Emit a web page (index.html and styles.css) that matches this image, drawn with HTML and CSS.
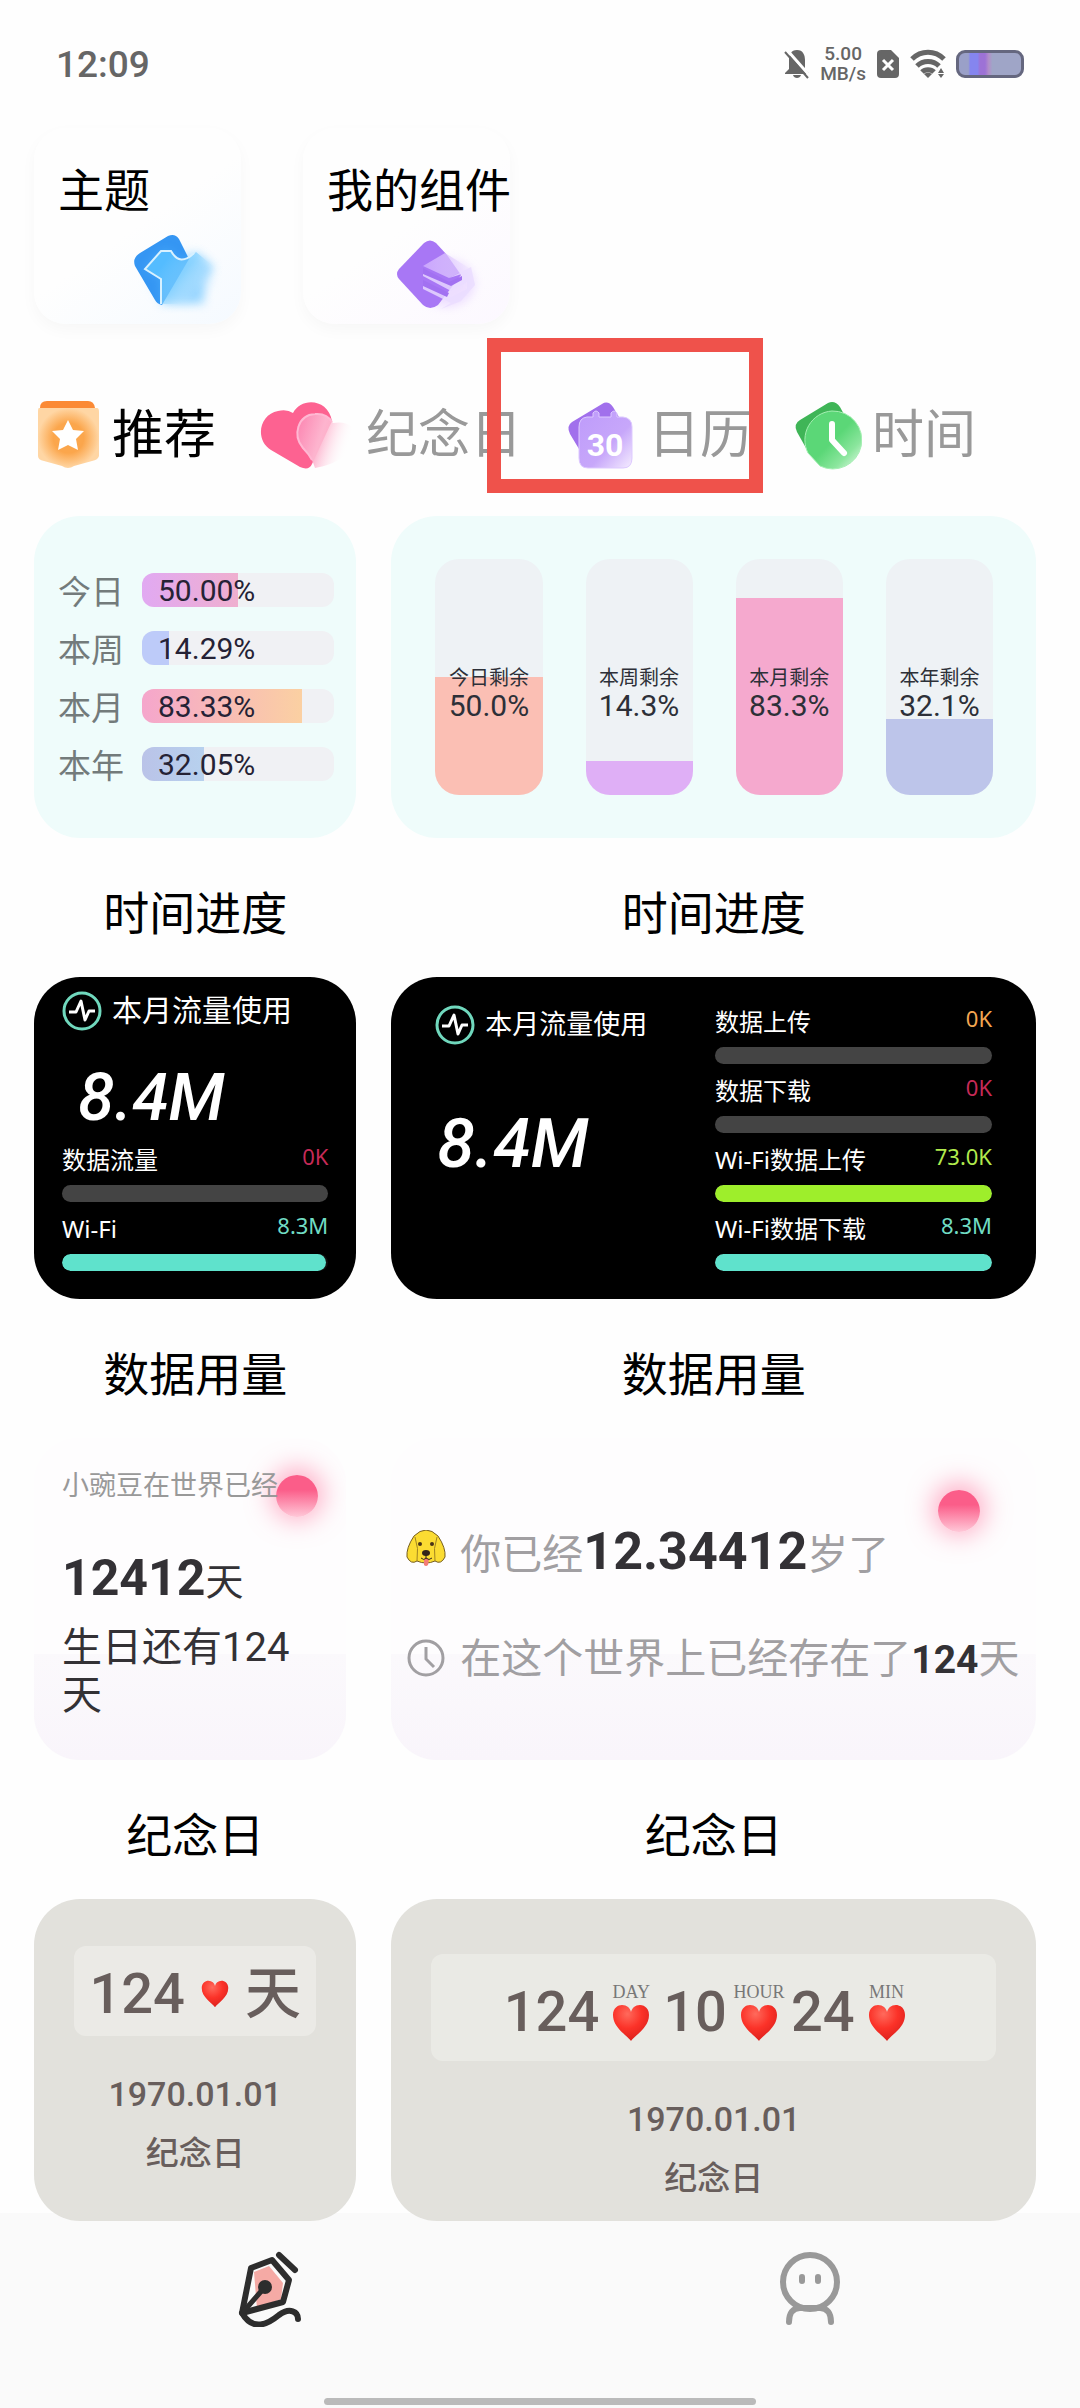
FILE: index.html
```html
<!DOCTYPE html>
<html lang="zh-CN">

<head>
    <meta charset="UTF-8">
    <meta name="viewport" content="width=device-width, initial-scale=1.0">
    <title>小组件</title>
    <link rel="stylesheet" href="styles.css">
</head>

<body>

    <!-- 公用图标 -->
    <svg class="defs" width="0" height="0" aria-hidden="true">
        <defs>
            <radialGradient id="heartRed" cx="40%" cy="25%" r="80%">
                <stop offset="0" stop-color="#ff6a5c" />
                <stop offset="0.5" stop-color="#fb3228" />
                <stop offset="1" stop-color="#d81f1c" />
            </radialGradient>
            <symbol id="heart" viewBox="0 0 38 38">
                <path d="M19 37C15 31 1 24 1 11C1 4 6 1 10 1C15 1 18 4 19 8C20 4 23 1 28 1C32 1 37 4 37 11C37 24 23 31 19 37Z" fill="url(#heartRed)" />
            </symbol>
            <symbol id="pulse" viewBox="0 0 40 40">
                <circle cx="20" cy="20" r="18" fill="none" stroke="#70d8bd" stroke-width="3" />
                <path d="M7 21H14L19 10L23 29L27 20H33" fill="none" stroke="#fff" stroke-width="3" stroke-linejoin="round" />
            </symbol>
        </defs>
    </svg>

    <header class="status-bar">
        <span class="clock">12:09</span>
        <div class="status-icons">
            <svg width="26" height="30" viewBox="0 0 26 30">
                <path d="M13 1C19 1 21 6 21 11V20L25 24V25H1V24L5 20V11C5 6 7 1 13 1Z" fill="#666" />
                <path d="M9 26H17C16 30 10 30 9 26Z" fill="#666" />
                <path d="M3 1L26 27" stroke="#fff" stroke-width="3" />
                <path d="M1 3L24 29" stroke="#666" stroke-width="2" />
            </svg>
            <span class="speed">5.00<br>MB/s</span>
            <svg width="24" height="30" viewBox="0 0 24 30">
                <path d="M5 1H15L23 9V25Q23 29 19 29H5Q1 29 1 25V5Q1 1 5 1Z" fill="#666" />
                <path d="M7 11L17 21M17 11L7 21" stroke="#fff" stroke-width="3" />
            </svg>
            <svg width="36" height="30" viewBox="0 0 36 30">
                <g fill="none" stroke="#666" stroke-width="5">
                    <path d="M2 10C11 1 25 1 34 10" />
                    <path d="M7 17C13 11 23 11 29 17" />
                    <path d="M12 23C15 20 21 20 24 23" />
                </g>
                <path d="M14 25Q18 22 22 25L18 29ZM28 24L31 19L34 24ZM28 25H34L31 29Z" fill="#666" />
            </svg>
            <span class="battery"></span>
        </div>
    </header>

    <main>
        <section class="shortcuts">
            <a class="shortcut" href="#theme">
                <span>主题</span>
                <svg class="shortcut-icon theme" width="100" height="90" viewBox="0 0 100 90">
                    <defs>
                        <linearGradient id="shirt" x1="0" y1="0" x2="1" y2="0.6">
                            <stop offset="0.3" stop-color="#54bcff" />
                            <stop offset="0.6" stop-color="#7fd0ff" stop-opacity="0.6" />
                            <stop offset="0.9" stop-color="#d8f0ff" stop-opacity="0" />
                        </linearGradient>
                        <filter id="soft" x="-30%" y="-30%" width="160%" height="160%">
                            <feGaussianBlur stdDeviation="5" />
                        </filter>
                    </defs>
                    <ellipse cx="52" cy="52" rx="32" ry="26" fill="#cdeaff" opacity="0.6" filter="url(#soft)" />
                    <path d="M12 28L40 11Q47 8 51 14L61 34L34 80Q29 79 27 75L7 41Q4 33 12 28Z" fill="#3596f3" />
                    <path d="M34 26H43Q53 44 68 27L86 42L76 56V79H33V53L17 44Z" fill="#54bcff" opacity="0.5" filter="url(#soft)" />
                    <path d="M34 26H43Q53 44 68 27L86 42L76 56V79H33V53L17 44Z" fill="url(#shirt)" />
                    <path d="M33 79V54L17 44L33 26H43Q52 42 66 28" fill="none" stroke="#d8f1ff" stroke-width="2" />
                </svg>
            </a>
            <a class="shortcut" href="#mine">
                <span>我的组件</span>
                <svg class="shortcut-icon mine" width="100" height="90" viewBox="0 0 100 90">
                    <defs>
                        <linearGradient id="layer">
                            <stop offset="0" stop-color="#c9a4fd" />
                            <stop offset="1" stop-color="#f0e5ff" stop-opacity="0.5" />
                        </linearGradient>
                    </defs>
                    <ellipse cx="56" cy="58" rx="28" ry="24" fill="#ead8ff" opacity="0.8" filter="url(#soft)" />
                    <path d="M8 44L33 18Q39 13 45 18L56 30L70 50L47 80Q39 86 32 80L8 54Q4 49 8 44Z" fill="#a877f5" />
                    <path d="M32 41L54 28L78 43L58 53Z" fill="url(#layer)" />
                    <path d="M32 41L58 53L71 49V54L60 60L32 48V51L60 66L76 57V64L60 72L32 58V64L60 78L50 84L70 76L84 60L80 42L58 53Z" fill="#eadcff" opacity="0.8" />
                    <path d="M32 43L58 57L71 51V55L60 61L32 49ZM32 55L58 68L56 72L32 61Z" fill="#a271f1" />
                </svg>
            </a>
        </section>

        <nav class="tabs">
            <button class="tab active" type="button">
                <svg width="68" height="76" viewBox="0 0 68 76">
                    <defs>
                        <radialGradient id="orange">
                            <stop offset="0.5" stop-color="#fba64c" />
                            <stop offset="1" stop-color="#ffd6a4" />
                        </radialGradient>
                    </defs>
                    <path d="M6 10Q6 3 13 3H54Q60 3 61 10Z" fill="#fb8a35" />
                    <path d="M5 10H63Q65 10 65 14V58Q64 62 58 63L40 68Q34 72 28 68L10 63Q4 62 4 58V14Q4 10 5 10Z" fill="url(#orange)" />
                    <path d="M34 22L39 32L50 33L42 41L44 52L34 47L24 52L26 41L18 33L29 32Z" fill="#fff" />
                </svg>
                推荐
            </button>
            <button class="tab" type="button">
                <svg width="100" height="76" viewBox="0 0 100 76">
                    <defs>
                        <linearGradient id="pinkFade" x1="0" y1="0.3" x2="1" y2="0.6">
                            <stop offset="0" stop-color="#fc8ab4" />
                            <stop offset="0.4" stop-color="#fdb4ce" />
                            <stop offset="0.9" stop-color="#fff" stop-opacity="0" />
                        </linearGradient>
                    </defs>
                    <path d="M37 15C45 -1 72 0 76 23L56 66Q53 73 44 69L15 52C-2 41 4 16 22 13Q31 11 37 15Z" fill="#fd6291" />
                    <path d="M41 33C42 13 70 11 77 25Q98 22 99 39C99 56 78 67 59 70Q57 61 47 51Q41 43 41 33Z" fill="url(#pinkFade)" />
                    <path d="M56 62Q53 56 47 50C36 37 42 17 59 16Q71 15 76 24" fill="none" stroke="#ffb8d3" stroke-width="2" />
                </svg>
                纪念日
            </button>
            <button class="tab marked" type="button">
                <svg width="76" height="76" viewBox="0 0 76 76">
                    <defs>
                        <linearGradient id="violet" x1="0" y1="0" x2="1" y2="1">
                            <stop offset="0" stop-color="#be9bfb" />
                            <stop offset="0.6" stop-color="#c7a7fa" />
                            <stop offset="1" stop-color="#f5edff" />
                        </linearGradient>
                    </defs>
                    <path d="M10 24L40 6Q46 2 51 9L60 24L20 56L8 36Q4 28 10 24Z" fill="#a170ec" />
                    <path d="M25 19H31V15Q34 11 37 15V19H49V15Q52 11 55 15V19H61Q70 20 70 29V60Q70 70 61 70H26Q17 70 17 60V29Q17 20 25 19Z" fill="url(#violet)" stroke="#ddc9ff" />
                    <text x="43" y="58" text-anchor="middle" class="cal-day">30</text>
                </svg>
                日历
            </button>
            <button class="tab" type="button">
                <svg width="70" height="76" viewBox="0 0 70 76">
                    <defs>
                        <linearGradient id="green" x1="0" y1="0" x2="1" y2="1">
                            <stop offset="0.5" stop-color="#5bd777" />
                            <stop offset="0.75" stop-color="#8be69d" />
                            <stop offset="1" stop-color="#ecfbee" />
                        </linearGradient>
                    </defs>
                    <path d="M8 22L36 5Q43 2 48 9L54 20L14 50L5 34Q1 26 8 22Z" fill="#3fb557" />
                    <path d="M40 13A29 29 0 1 1 28 68L16 55A29 29 0 0 1 40 13Z" fill="url(#green)" stroke="#a5efb3" />
                    <path d="M40 26V42L52 55" fill="none" stroke="#fff" stroke-width="6" stroke-linecap="round" stroke-linejoin="round" />
                </svg>
                时间
            </button>
        </nav>

        <section class="widgets">
            <!-- 时间进度 -->
            <figure>
                <div class="card mint progress-list">
                    <div class="progress-row">
                        <span>今日</span>
                        <div class="track"><i class="fill today" style="width: 50%"></i><b>50.00%</b></div>
                    </div>
                    <div class="progress-row">
                        <span>本周</span>
                        <div class="track"><i class="fill week" style="width: 14.29%"></i><b>14.29%</b></div>
                    </div>
                    <div class="progress-row">
                        <span>本月</span>
                        <div class="track"><i class="fill month" style="width: 83.33%"></i><b>83.33%</b></div>
                    </div>
                    <div class="progress-row">
                        <span>本年</span>
                        <div class="track"><i class="fill year" style="width: 32.05%"></i><b>32.05%</b></div>
                    </div>
                </div>
                <figcaption>时间进度</figcaption>
            </figure>
            <figure>
                <div class="card mint columns">
                    <div class="column">
                        <i class="level peach" style="height: 50%"></i>
                        <span>今日剩余</span><b>50.0%</b>
                    </div>
                    <div class="column">
                        <i class="level lilac" style="height: 14.3%"></i>
                        <span>本周剩余</span><b>14.3%</b>
                    </div>
                    <div class="column">
                        <i class="level pink" style="height: 83.3%"></i>
                        <span>本月剩余</span><b>83.3%</b>
                    </div>
                    <div class="column">
                        <i class="level blue" style="height: 32.1%"></i>
                        <span>本年剩余</span><b>32.1%</b>
                    </div>
                </div>
                <figcaption>时间进度</figcaption>
            </figure>

            <!-- 数据用量 -->
            <figure>
                <div class="card dark usage-small">
                    <div class="usage-title"><svg width="40" height="40"><use href="#pulse" /></svg>本月流量使用</div>
                    <div class="usage-total">8.4M</div>
                    <div class="meter">
                        <div class="meter-text"><span>数据流量</span><b class="red">0K</b></div>
                        <div class="meter-bar"></div>
                    </div>
                    <div class="meter">
                        <div class="meter-text"><span>Wi-Fi</span><b class="teal">8.3M</b></div>
                        <div class="meter-bar"><i class="teal-bar" style="width: 99%"></i></div>
                    </div>
                </div>
                <figcaption>数据用量</figcaption>
            </figure>
            <figure>
                <div class="card dark usage-wide">
                    <div class="usage-side">
                        <div class="usage-title"><svg width="40" height="40"><use href="#pulse" /></svg>本月流量使用</div>
                        <div class="usage-total">8.4M</div>
                    </div>
                    <div class="usage-meters">
                        <div class="meter">
                            <div class="meter-text"><span>数据上传</span><b class="orange">0K</b></div>
                            <div class="meter-bar"></div>
                        </div>
                        <div class="meter">
                            <div class="meter-text"><span>数据下载</span><b class="red">0K</b></div>
                            <div class="meter-bar"></div>
                        </div>
                        <div class="meter">
                            <div class="meter-text"><span>Wi-Fi数据上传</span><b class="lime">73.0K</b></div>
                            <div class="meter-bar"><i class="lime-bar" style="width: 100%"></i></div>
                        </div>
                        <div class="meter">
                            <div class="meter-text"><span>Wi-Fi数据下载</span><b class="teal">8.3M</b></div>
                            <div class="meter-bar"><i class="teal-bar" style="width: 100%"></i></div>
                        </div>
                    </div>
                </div>
                <figcaption>数据用量</figcaption>
            </figure>

            <!-- 纪念日 -->
            <figure>
                <div class="card life life-small">
                    <i class="sun"></i>
                    <p class="life-title">小豌豆在世界已经</p>
                    <p class="life-days"><b>12412</b>天</p>
                    <p class="life-next">生日还有124天</p>
                </div>
                <figcaption>纪念日</figcaption>
            </figure>
            <figure>
                <div class="card life life-wide">
                    <i class="sun"></i>
                    <p class="life-line">
                        <svg width="40" height="46" viewBox="0 0 40 46">
                            <path d="M8 6Q20 -6 32 6Q40 18 39 27Q35 35 29 31Q20 35 11 31Q5 35 1 27Q0 18 8 6Z" fill="#fbdc32" stroke="#755d20" />
                            <path d="M9 7Q13 18 11 31M31 7Q27 18 29 31" fill="none" stroke="#a18421" />
                            <circle cx="14" cy="14" r="2" fill="#493318" />
                            <circle cx="26" cy="14" r="2" fill="#493318" />
                            <path d="M18 29H23L22 35Q20 37 18 35Z" fill="#f47c75" />
                            <ellipse cx="20" cy="23" rx="4" ry="3" fill="#33251a" />
                            <path d="M20 24V29M15 28Q18 31 20 28Q23 31 26 28" fill="none" stroke="#33251a" />
                        </svg>
                        <span>你已经<b class="age">12.34412</b>岁了</span>
                    </p>
                    <p class="life-line">
                        <svg width="40" height="46" viewBox="0 0 40 46">
                            <circle cx="20" cy="22" r="17" fill="none" stroke="#a19fa2" stroke-width="3" />
                            <path d="M20 11V23L28 31" fill="none" stroke="#a19fa2" stroke-width="3" />
                        </svg>
                        <span>在这个世界上已经存在了<b>124</b>天</span>
                    </p>
                </div>
                <figcaption>纪念日</figcaption>
            </figure>

            <figure>
                <div class="card stone">
                    <div class="count">
                        124
                        <svg width="28" height="28"><use href="#heart" /></svg>
                        <span>天</span>
                    </div>
                    <p class="date">1970.01.01</p>
                    <p class="name">纪念日</p>
                </div>
            </figure>
            <figure>
                <div class="card stone stone-wide">
                    <div class="count">
                        124
                        <span class="unit"><small>DAY</small><svg width="38" height="38"><use href="#heart" /></svg></span>
                        10
                        <span class="unit"><small>HOUR</small><svg width="38" height="38"><use href="#heart" /></svg></span>
                        24
                        <span class="unit"><small>MIN</small><svg width="38" height="38"><use href="#heart" /></svg></span>
                    </div>
                    <p class="date">1970.01.01</p>
                    <p class="name">纪念日</p>
                </div>
            </figure>
        </section>
    </main>

    <nav class="bottom-nav">
        <a href="#widgets" aria-label="组件">
            <svg width="66" height="76" viewBox="0 0 66 76">
                <path d="M17 21L32 15L46 32L44 48L20 58Z" fill="#f5aaa5" />
                <g fill="none" stroke="#2d2d2d" stroke-width="6" stroke-linecap="round" stroke-linejoin="round">
                    <path d="M14 17L35 9L52 29L46 51L5 62Z" />
                    <path d="M42 4L58 19" />
                    <path d="M5 62C16 81 31 73 42 64C53 56 61 61 61 68" />
                    <path d="M7 60L27 37" stroke-width="5" />
                </g>
                <circle cx="28" cy="36" r="7" fill="#2d2d2d" />
            </svg>
        </a>
        <a href="#me" aria-label="我的">
            <svg width="62" height="76" viewBox="0 0 62 76">
                <g fill="none" stroke="#999" stroke-width="6" stroke-linecap="round">
                    <ellipse cx="31" cy="31" rx="27" ry="27" />
                    <path d="M10 71C10 62 14 57 21 57H41C48 57 52 62 52 71" />
                    <path d="M23 26V30M39 26V30" />
                </g>
            </svg>
        </a>
        <i class="home-bar"></i>
    </nav>

</body>

</html>
```
FILE: styles.css
```css
* {
    box-sizing: border-box;
}

body {
    margin: 0;
    min-height: 100vh;
    background-color: #fefefe;
    color: #000;
    font-family: Roboto, "Noto Sans CJK SC", sans-serif;
}

figure,
p {
    margin: 0;
}

a {
    color: inherit;
    text-decoration: none;
}

svg {
    display: block;
    flex-shrink: 0;
}

i {
    display: block;
}

.defs {
    position: absolute;
}

/* 状态栏 */
.status-bar {
    display: flex;
    align-items: center;
    justify-content: space-between;
    height: 128px;
    padding: 0 56px;
    color: #666;
}

.clock {
    font-size: 37px;
    font-weight: 500;
}

.status-icons {
    display: flex;
    align-items: center;
    gap: 10px;
}

.speed {
    font-size: 19px;
    font-weight: 500;
    line-height: 20px;
    text-align: center;
}

.battery {
    width: 68px;
    height: 28px;
    border: 3px solid #65677f;
    border-radius: 9px;
    background: linear-gradient(90deg, #9aa0c8 15%, #8585ef 18% 30%, #9d72d6 34% 42%, #b28fc9 48%, #9fa5c7 54%);
}

/* 顶部入口 */
.shortcuts {
    display: flex;
    gap: 62px;
    padding: 0 34px;
}

.shortcut {
    width: 207px;
    height: 196px;
    padding: 33px 24px 0;
    border-radius: 32px;
    background: linear-gradient(145deg, #fefefe 50%, #f5faff);
    box-shadow: 0 6px 16px rgba(0, 0, 0, 0.03);
    font-size: 46px;
    line-height: 60px;
    white-space: nowrap;
}

.shortcut + .shortcut {
    background: linear-gradient(145deg, #fefefe 50%, #fcf8ff);
}

.shortcut-icon {
    margin: 4px 0 0 70px;
}

.shortcut-icon.mine {
    margin-left: 64px;
}

/* 分类 */
.tabs {
    display: flex;
    align-items: center;
    gap: 40px;
    height: 192px;
    padding: 28px 34px 0;
}

.tab {
    position: relative;
    display: flex;
    align-items: center;
    gap: 10px;
    height: 80px;
    padding: 4px 0 0;
    border: 0;
    background: none;
    color: #999;
    font-family: inherit;
    font-size: 52px;
    line-height: 80px;
    white-space: nowrap;
    cursor: pointer;
}

.tab.active {
    color: #000;
}

.tab.marked::after {
    content: "";
    position: absolute;
    top: -56px;
    right: -11px;
    bottom: -19px;
    left: -75px;
    border: 14px solid #ef524b;
    pointer-events: none;
}

.cal-day {
    fill: #fff;
    font-size: 32px;
    font-weight: 700;
    line-height: 32px;
}

/* 组件列表 */
.widgets {
    display: grid;
    grid-template-columns: 1fr 2fr;
    column-gap: 35px;
    padding: 0 44px 0 34px;
}

figure {
    position: relative;
    z-index: 1;
    min-width: 0;
}

figcaption {
    padding: 41px 0 28px;
    font-size: 46px;
    line-height: 70px;
    text-align: center;
}

.card {
    position: relative;
    height: 322px;
    border-radius: 46px;
    overflow: hidden;
}

.mint {
    background-color: #effcfb;
}

.dark {
    background-color: #000;
    color: #fff;
}

.progress-list {
    display: flex;
    flex-direction: column;
    justify-content: center;
    gap: 24px;
    padding: 0 22px 0 24px;
}

.progress-row {
    display: flex;
    align-items: center;
    gap: 18px;
    height: 34px;
    color: #737b7b;
    font-size: 33px;
}

.track {
    position: relative;
    flex: 1;
    height: 34px;
    border-radius: 12px;
    background-color: #f0f1f4;
    overflow: hidden;
}

.track b {
    position: absolute;
    inset: 0 0 0 16px;
    color: #252235;
    font-size: 30px;
    font-weight: 400;
    line-height: 36px;
}

.fill {
    height: 100%;
}

.today {
    background: linear-gradient(90deg, #e1a9f2, #efafcf);
}

.week {
    background-color: #bdcbf9;
}

.month {
    background: linear-gradient(90deg, #f5a6cc, #fbd0a2);
}

.year {
    background: linear-gradient(90deg, #bac3e8, #b7d1ee);
}

.columns {
    display: flex;
    gap: 43px;
    padding: 43px 43px 43px 44px;
}

.column {
    position: relative;
    flex: 1;
    display: flex;
    flex-direction: column;
    align-items: center;
    justify-content: center;
    padding-top: 34px;
    border-radius: 24px;
    background-color: #eef2f5;
    color: #2d3038;
    overflow: hidden;
}

.column span,
.column b {
    position: relative;
    font-size: 20px;
    font-weight: 400;
    line-height: 24px;
}

.column b {
    font-size: 30px;
    line-height: 32px;
}

.level {
    position: absolute;
    right: 0;
    bottom: 0;
    left: 0;
}

.peach {
    background-color: #fbbfb4;
}

.lilac {
    background-color: #dfaff6;
}

.pink {
    background-color: #f5a9ce;
}

.blue {
    background-color: #bdc5ea;
}

/* 数据用量 */
.usage-small {
    display: flex;
    flex-direction: column;
    padding: 14px 28px 28px;
}

.usage-title {
    display: flex;
    align-items: center;
    gap: 10px;
    height: 40px;
    font-size: 30px;
    line-height: 36px;
    white-space: nowrap;
}

.usage-total {
    margin: 32px 0 0;
    padding-left: 16px;
    font-size: 66px;
    font-style: italic;
    font-weight: 500;
    line-height: 70px;
}

.meter {
    height: 69px;
}

.meter-text {
    display: flex;
    justify-content: space-between;
    height: 52px;
    font-family: "Noto Sans", "Noto Sans CJK SC", sans-serif;
    font-size: 24px;
    line-height: 54px;
}

.meter-text b {
    font-size: 22px;
    font-weight: 400;
    line-height: 46px;
}

.meter-bar {
    height: 17px;
    border-radius: 9px;
    background-color: #444;
    overflow: hidden;
}

.meter-bar i {
    height: 100%;
    border-radius: 9px;
}

.usage-small .meter:last-child .meter-bar {
    background-color: #111;
}

.red {
    color: #c62a57;
}

.orange {
    color: #f4a651;
}

.lime {
    color: #b1ea4d;
}

.teal {
    color: #70dcc3;
}

.lime-bar {
    background-color: #9eee2b;
}

.teal-bar {
    background-color: #5fe2cc;
}

.usage-wide {
    display: grid;
    grid-template-columns: 1fr 277px;
    padding: 18px 44px 28px;
}

.usage-side {
    padding-top: 10px;
}

.usage-wide .usage-title {
    font-size: 27px;
}

.usage-wide .usage-total {
    margin-top: 64px;
    padding-left: 2px;
    font-size: 68px;
}

/* 纪念日 */
.life {
    background: linear-gradient(#fbf9fc, #f9f5fb) bottom / 100% 106px no-repeat, #fefdfe;
    color: #333135;
}

.life-small {
    width: 312px;
    padding: 28px 50px 0 28px;
}

.sun {
    position: absolute;
    top: 37px;
    right: 28px;
    width: 42px;
    height: 42px;
    border-radius: 50%;
    background: linear-gradient(#fb5d89 35%, #ffc8d8);
    box-shadow: 0 -2px 24px 6px rgba(255, 105, 150, 0.5);
}

.life-title {
    position: relative;
    color: #999;
    font-size: 27px;
    line-height: 40px;
    white-space: nowrap;
}

.life-days {
    margin-top: 38px;
    font-size: 38px;
    line-height: 68px;
}

.life-days b {
    font-size: 50px;
}

.life-next {
    margin-top: 8px;
    font-size: 40px;
    line-height: 48px;
}

.life-wide {
    padding: 75px 0 0 15px;
}

.life-wide .sun {
    top: 52px;
    right: 56px;
}

.life-line {
    display: flex;
    align-items: center;
    gap: 14px;
    height: 80px;
    margin-bottom: 26px;
    color: #a19fa2;
    font-size: 41px;
    line-height: 60px;
    white-space: nowrap;
}

.life-line b {
    color: #333135;
    font-size: 39px;
}

.life-line .age {
    font-size: 52px;
}

/* 倒数日 */
.stone {
    padding: 47px 40px 0;
    background-color: #e2e1dc;
    color: #685e5c;
    text-align: center;
}

.count {
    display: flex;
    align-items: center;
    justify-content: center;
    gap: 16px;
    height: 90px;
    padding-top: 6px;
    border-radius: 12px;
    background-color: #ebeae6;
    font-size: 56px;
    font-weight: 500;
    line-height: 76px;
}

.date {
    margin-top: 34px;
    font-size: 34px;
    font-weight: 500;
    line-height: 48px;
}

.name {
    margin-top: 12px;
    font-size: 33px;
    font-weight: 500;
    line-height: 48px;
}

.stone-wide {
    padding-top: 55px;
}

.stone-wide .count {
    height: 107px;
    padding: 8px 12px 0 0;
    background-color: #eaeae5;
    gap: 7px;
}

.unit {
    display: flex;
    flex-direction: column;
    align-items: center;
    width: 50px;
    padding-bottom: 2px;
}

.unit small {
    color: #777;
    font-family: "Liberation Serif", serif;
    font-size: 18px;
    font-weight: 400;
    line-height: 24px;
}

/* 底部导航 */
.bottom-nav {
    position: fixed;
    right: 0;
    bottom: 0;
    left: 0;
    display: flex;
    height: 195px;
    background-color: #fafafa;
}

.bottom-nav a {
    flex: 1;
    display: flex;
    justify-content: center;
    padding-top: 38px;
}

.home-bar {
    position: absolute;
    bottom: 3px;
    left: 30%;
    width: 40%;
    height: 7px;
    border-radius: 4px;
    background-color: #bababa;
}
```
